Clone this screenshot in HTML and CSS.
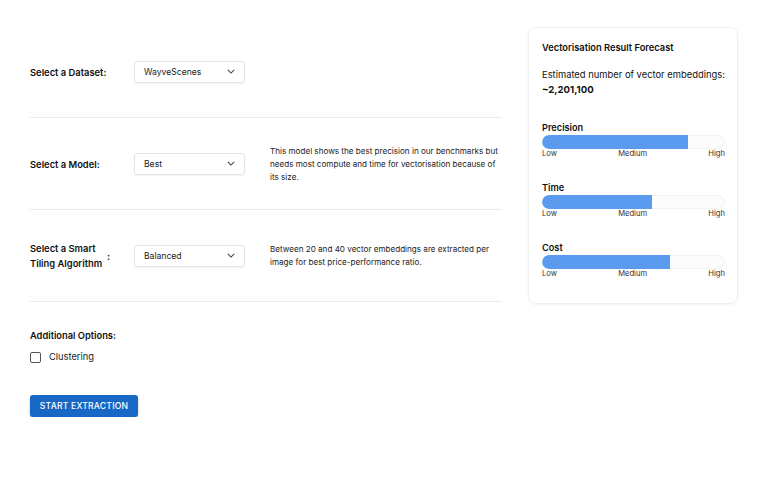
FILE: index.html
```html
<!DOCTYPE html>
<html>
<head>
<meta charset="utf-8">
<link rel="stylesheet" href="styles.css">
</head>
<body>
<div class="page">
  <div class="main">
    <div class="row">
      <div class="label">Select a Dataset:</div>
      <div class="select"><span>WayveScenes</span><svg class="chev" viewBox="0 0 10 6" width="8" height="5"><path d="M1 1l4 4 4-4" fill="none" stroke="#444" stroke-width="1.3"/></svg></div>
    </div>
    <div class="row">
      <div class="label">Select a Model:</div>
      <div class="select"><span>Best</span><svg class="chev" viewBox="0 0 10 6" width="8" height="5"><path d="M1 1l4 4 4-4" fill="none" stroke="#444" stroke-width="1.3"/></svg></div>
      <div class="desc">This model shows the best precision in our benchmarks but needs most compute and time for vectorisation because of its size.</div>
    </div>
    <div class="row">
      <div class="label two"><span>Select a Smart Tiling Algorithm</span><span class="colon">:</span></div>
      <div class="select"><span>Balanced</span><svg class="chev" viewBox="0 0 10 6" width="8" height="5"><path d="M1 1l4 4 4-4" fill="none" stroke="#444" stroke-width="1.3"/></svg></div>
      <div class="desc">Between 20 and 40 vector embeddings are extracted per image for best price-performance ratio.</div>
    </div>
    <div class="options">
      <div class="opt-title">Additional Options:</div>
      <label class="check"><span class="box"></span>Clustering</label>
    </div>
    <button class="btn">START EXTRACTION</button>
  </div>
  <div class="card">
    <div class="card-title">Vectorisation Result Forecast</div>
    <div class="est">Estimated number of vector embeddings:</div>
    <div class="est-val">~2,201,100</div>
    <div class="metric first">
      <div class="m-label">Precision</div>
      <div class="bar"><div class="fill" style="width:80%"></div></div>
      <div class="scale"><span>Low</span><span>Medium</span><span>High</span></div>
    </div>
    <div class="metric">
      <div class="m-label">Time</div>
      <div class="bar"><div class="fill" style="width:60%"></div></div>
      <div class="scale"><span>Low</span><span>Medium</span><span>High</span></div>
    </div>
    <div class="metric">
      <div class="m-label">Cost</div>
      <div class="bar"><div class="fill" style="width:70%"></div></div>
      <div class="scale"><span>Low</span><span>Medium</span><span>High</span></div>
    </div>
  </div>
</div>
</body>
</html>
```
FILE: styles.css
```css
* { box-sizing: border-box; }
html, body { margin: 0; background: #fff; }
body { font-family: Inter, "Liberation Sans", sans-serif; color: #111; }
.page { display: flex; align-items: flex-start; padding: 26px 0 0 30px; gap: 26px; }
.main { width: 472px; display: flex; flex-direction: column; }
.row { display: flex; align-items: center; height: 92px; border-bottom: 1px solid #ececec; }
.label { width: 104px; flex: none; font-weight: 600; font-size: 9.4px; line-height: 15px; padding-top: 1px; }
.label.two { display: flex; align-items: center; }
.label.two span:first-child { width: 76px; }
.label .colon { margin-left: 1px; }
.select { width: 111px; height: 22px; flex: none; border: 1px solid #e6e6e6; border-radius: 3px; box-shadow: 0 1px 2px rgba(0,0,0,0.06); display: flex; align-items: center; justify-content: space-between; padding: 0 9px 0 9px; font-size: 8.6px; color: #222; }
.chev { display: block; }
.desc { margin-left: 25px; font-size: 8.1px; line-height: 13px; color: #222; width: 236px; padding-top: 1px; }
.options { padding-top: 27px; }
.opt-title { font-weight: 600; font-size: 9.3px; line-height: 14px; }
.check { display: flex; align-items: center; margin-top: 7px; font-size: 9.3px; line-height: 14px; color: #222; }
.box { width: 11px; height: 11px; border: 1.3px solid #555; border-radius: 2px; margin-right: 8px; }
.btn { margin-top: 31px; width: 108px; height: 22px; align-self: flex-start; background: #1767c4; color: #fff; border: 0; border-radius: 3px; font-family: Inter, "Liberation Sans", sans-serif; font-size: 8.6px; font-weight: 500; letter-spacing: 0.2px; box-shadow: 0 2px 3px rgba(0,0,0,0.25); padding: 0; }
.card { width: 210px; margin-top: 1px; border: 1px solid #efefef; border-radius: 8px; box-shadow: 0 1px 3px rgba(0,0,0,0.05); padding: 13px 12px 24px 13px; }
.card-title { font-weight: 600; font-size: 9.3px; line-height: 14px; }
.est { margin-top: 12px; font-size: 9.4px; line-height: 15px; }
.est-val { font-weight: 700; font-size: 9.6px; line-height: 15px; }
.metric { margin-top: 22px; }
.metric.first { margin-top: 24px; }
.m-label { font-weight: 600; font-size: 9.2px; line-height: 14px; }
.bar { height: 14px; border-radius: 7px; background: #fcfcfc; box-shadow: inset 0 0 0 1px #f2f2f2; overflow: hidden; }
.fill { height: 100%; background: #5b9bef; border-radius: 7px 0 0 7px; }
.scale { display: flex; justify-content: space-between; font-size: 7.6px; line-height: 10px; color: #333; }
```
